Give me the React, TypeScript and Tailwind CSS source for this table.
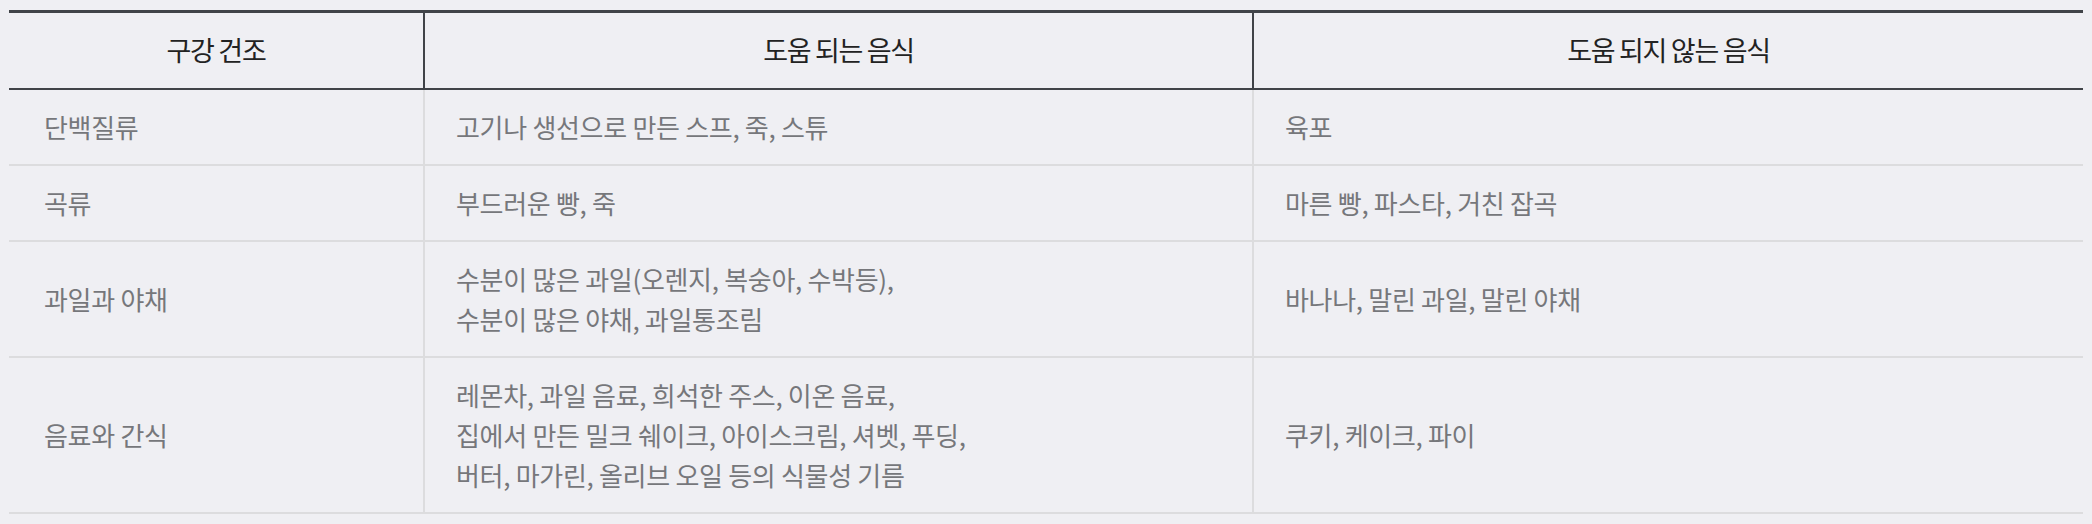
import React from "react";

const rows = [
  { kind: "단백질류", good: ["고기나 생선으로 만든 스프, 죽, 스튜"], bad: "육포" },
  { kind: "곡류", good: ["부드러운 빵, 죽"], bad: "마른 빵, 파스타, 거친 잡곡" },
  {
    kind: "과일과 야채",
    good: ["수분이 많은 과일(오렌지, 복숭아, 수박등),", "수분이 많은 야채, 과일통조림"],
    bad: "바나나, 말린 과일, 말린 야채",
  },
  {
    kind: "음료와 간식",
    good: [
      "레몬차, 과일 음료, 희석한 주스, 이온 음료,",
      "집에서 만든 밀크 쉐이크, 아이스크림, 셔벳, 푸딩,",
      "버터, 마가린, 올리브 오일 등의 식물성 기름",
    ],
    bad: "쿠키, 케이크, 파이",
  },
];

const font = { fontFamily: '"Noto Sans CJK KR", "Noto Sans", sans-serif' };

export default function App() {
  return (
    <div className="min-h-[524px] w-full bg-[#efeff3] pt-[10px]" style={font}>
      <div className="mx-[9px] border-t-[3px] border-[#404348]">
        <div className="grid grid-cols-[414px_829px_1fr] border-b-2 border-[#404348] text-[27px] tracking-[-1.3px] text-[#222]">
          <div className="flex h-[75px] items-center justify-center">구강 건조</div>
          <div className="flex h-[75px] items-center justify-center border-l-2 border-[#404348]">도움 되는 음식</div>
          <div className="flex h-[75px] items-center justify-center border-l-2 border-[#404348]">도움 되지 않는 음식</div>
        </div>
        {rows.map((r) => (
          <div
            key={r.kind}
            className="grid grid-cols-[414px_829px_1fr] border-b-2 border-[#dcdcde] text-[26px] leading-[40px] tracking-[-0.3px] text-[#76777b]"
          >
            <div className="flex items-center px-[35px] py-[17px]">{r.kind}</div>
            <div className="flex flex-col justify-center border-l-2 border-[#dcdcde] px-[31px] py-[17px]">
              {r.good.map((g) => (
                <span key={g}>{g}</span>
              ))}
            </div>
            <div className="flex items-center border-l-2 border-[#dcdcde] px-[31px] py-[17px]">{r.bad}</div>
          </div>
        ))}
      </div>
    </div>
  );
}
